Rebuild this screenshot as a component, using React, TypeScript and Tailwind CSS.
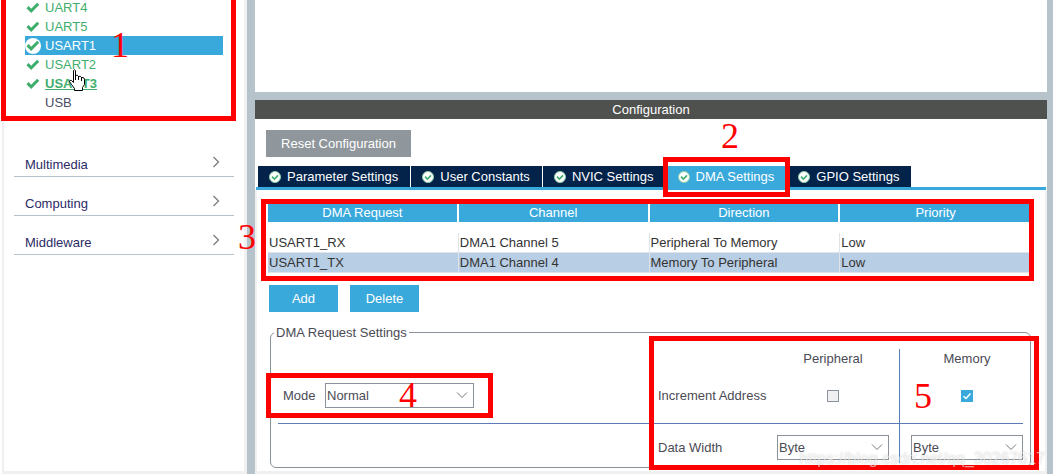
import { useState } from 'react';
import type { ReactNode } from 'react';

type PeripheralState = 'ok' | 'none';

interface Peripheral {
  name: string;
  state: PeripheralState;
}

interface DmaRequest {
  request: string;
  channel: string;
  direction: string;
  priority: string;
}

const PERIPHERALS: Peripheral[] = [
  { name: 'UART4', state: 'ok' },
  { name: 'UART5', state: 'ok' },
  { name: 'USART1', state: 'ok' },
  { name: 'USART2', state: 'ok' },
  { name: 'USART3', state: 'ok' },
  { name: 'USB', state: 'none' },
];

const CATEGORIES = ['Multimedia', 'Computing', 'Middleware'];

const TABS = [
  'Parameter Settings',
  'User Constants',
  'NVIC Settings',
  'DMA Settings',
  'GPIO Settings',
];

const REQUESTS: DmaRequest[] = [
  {
    request: 'USART1_RX',
    channel: 'DMA1 Channel 5',
    direction: 'Peripheral To Memory',
    priority: 'Low',
  },
  {
    request: 'USART1_TX',
    channel: 'DMA1 Channel 4',
    direction: 'Memory To Peripheral',
    priority: 'Low',
  },
];

function CheckMark() {
  return (
    <svg viewBox="0 0 16 16" className="w-4 h-4" fill="none">
      <path d="M2.5 7.2 L6.2 10.8 L13.2 3.8" stroke="#3fae6d" strokeWidth="3" />
    </svg>
  );
}

function TabIcon() {
  return (
    <svg viewBox="0 0 12 12" className="w-3 h-3 shrink-0" fill="none">
      <circle cx="6" cy="6" r="5.5" fill="#fff" stroke="#8fd0a8" />
      <path d="M3 5.6 L5.4 8 L9 4.4" stroke="#3fae6d" strokeWidth="1.6" />
    </svg>
  );
}

function HandCursor() {
  return (
    <svg viewBox="0 0 18 23" className="w-[18px] h-[23px]">
      <path
        d="M5.5 13.5 V1.5 Q6.500 0 7.500 1.5 V6.500 Q9.500 5.500 10.500 7.500 Q12.500 6.500 13.500 8.500 Q16.500 8 16.500 10.500 V15.500 L14.500 18.500 V21.500 H6.500 V19.500 L3.500 15.500 L1.500 12.500 Q1.500 10.500 3.500 11.500 Z"
        fill="#fff"
        stroke="#000"
      />
      <path d="M7.500 6 v5 M10.500 7 v4 M13.500 8 v4" stroke="#000" />
    </svg>
  );
}

// Red frame drawn over a region of the window
function Frame({ className }: { className: string }) {
  return <div className={`absolute z-10 border-5 border-[#ff0000] pointer-events-none ${className}`} />;
}

function Step({ className, children }: { className: string; children: ReactNode }) {
  return (
    <span
      className={`absolute z-20 font-['Liberation_Serif',serif] text-[36px] leading-9 text-[#ff0000] pointer-events-none ${className}`}
    >
      {children}
    </span>
  );
}

interface ComboProps {
  id: string;
  label?: string;
  options: string[];
  className: string;
}

function Combo({ id, label, options, className }: ComboProps) {
  return (
    <div className={`relative ${className}`}>
      <select
        id={id}
        aria-label={label}
        className="block w-full h-[25px] pl-px appearance-none bg-white border border-[#8b9299] text-[#4b4b55]"
      >
        {options.map((option) => (
          <option key={option}>{option}</option>
        ))}
      </select>
      <svg
        viewBox="0 0 12 8"
        className="absolute right-1.5 top-2 w-3 h-2 pointer-events-none"
        fill="none"
      >
        <path d="M1 1.500 L6 6.500 L11 1.500" stroke="#777" />
      </svg>
    </div>
  );
}

function CheckBox({ label, defaultChecked }: { label: string; defaultChecked?: boolean }) {
  return (
    <span className="relative w-3 h-3">
      <input
        type="checkbox"
        aria-label={label}
        defaultChecked={defaultChecked}
        className="peer block w-3 h-3 appearance-none bg-[#f0f0f2] border border-[#8b9299] checked:bg-[#39a9dc] checked:border-[#39a9dc]"
      />
      <svg
        viewBox="0 0 12 12"
        className="absolute inset-0 w-3 h-3 hidden peer-checked:block pointer-events-none"
        fill="none"
      >
        <path d="M2.500 6.200 L5 8.500 L9.500 3.500" stroke="#fff" strokeWidth="1.500" />
      </svg>
    </span>
  );
}

function Sidebar() {
  const [selected, setSelected] = useState('USART1');

  return (
    <aside className="relative flex w-[247px] shrink-0 pl-0.5 bg-white">
      <div className="flex-1 border-l-2 border-r-3 border-b-3 border-[#f0f0f2]">
        <ul className="-mt-0.5 pl-[21px] pr-[21px]">
          {PERIPHERALS.map(({ name, state }) => {
            const active = name === selected;
            return (
              <li key={name}>
                <button
                  onClick={() => setSelected(name)}
                  className={`flex items-center w-full h-[19px] text-left ${
                    active ? 'bg-[#39a9dc] text-white' : state === 'ok' ? 'text-[#3fae6d]' : 'text-[#4b4b63]'
                  }`}
                >
                  <span
                    className={`flex items-center justify-center w-4 h-4 mr-1 rounded-full ${
                      active ? 'bg-white' : ''
                    }`}
                  >
                    {state === 'ok' && <CheckMark />}
                  </span>
                  <span className={name === 'USART3' ? 'font-bold underline' : ''}>{name}</span>
                </button>
              </li>
            );
          })}
        </ul>

        <nav className="mt-[26px] px-2.5">
          {CATEGORIES.map((category) => (
            <button
              key={category}
              className="flex items-end justify-between w-full h-[39px] pl-[11px] pr-3.5 pb-0.5 border-b border-[#b7c3ca] text-left text-[#2b2b66]"
            >
              {category}
              <svg viewBox="0 0 8 14" className="w-2 h-3.5 mb-[5px]" fill="none">
                <path d="M1.500 2 L6.500 7 L1.500 12" stroke="#777" strokeWidth="1.200" />
              </svg>
            </button>
          ))}
        </nav>
      </div>

      <Frame className="-top-2 left-px w-[235px] h-[129px]" />
      <Step className="left-[111px] top-[27px]">1</Step>
      <Step className="left-[238px] top-[219px]">3</Step>
      <div className="absolute left-[68px] top-[69px] z-20">
        <HandCursor />
      </div>
    </aside>
  );
}

function RequestTable() {
  const [selected, setSelected] = useState(1);

  return (
    <div className="relative mt-[14px] ml-[11px] mr-3.5">
      <table className="w-full table-fixed border-separate border-spacing-0 text-[#333]">
        <thead>
          <tr className="bg-[#39a9dc] text-white">
            {['DMA Request', 'Channel', 'Direction', 'Priority'].map((title) => (
              <th
                key={title}
                className="p-0 font-normal leading-[18px] border-r-2 border-white last:border-r-0"
              >
                {title}
              </th>
            ))}
          </tr>
        </thead>
        <tbody>
          <tr className="h-[11px]" aria-hidden="true">
            <td colSpan={4} className="p-0" />
          </tr>
          {REQUESTS.map((row, index) => (
            <tr
              key={row.request}
              onClick={() => setSelected(index)}
              className={index === selected ? 'bg-[#b8cee4]' : ''}
            >
              {[row.request, row.channel, row.direction, row.priority].map((cell) => (
                <td
                  key={cell}
                  className="p-0 pl-px leading-[19px] border-r border-b border-[#dfe3e8] last:border-r-0"
                >
                  {cell}
                </td>
              ))}
            </tr>
          ))}
        </tbody>
      </table>
      <Frame className="-top-[5px] -left-[7px] -right-[3px] h-[82px]" />
    </div>
  );
}

function RequestSettings() {
  return (
    <div className="relative mt-[11px] ml-[13px] mr-3.5">
      <fieldset className="px-[7px] pb-1 border border-[#8b9299] rounded-md">
        <legend className="-ml-1 px-0.5 leading-[19px]">DMA Request Settings</legend>
        <div className="mt-[7px] grid grid-cols-[1fr_119px_122px_124px] grid-rows-[19px_56px_39px]">
          <div className="col-span-2" />
          <div className="flex items-center justify-center w-28">Peripheral</div>
          <div className="flex items-center justify-center pl-[11px] border-l border-[#5b7cb4]">
            Memory
          </div>

          <div className="flex items-center pl-[5px] border-b border-[#5b7cb4]">
            <div className="relative flex items-center">
              <label htmlFor="mode" className="w-[42px]">
                Mode
              </label>
              <Combo id="mode" options={['Normal', 'Circular']} className="w-[149px]" />
              <Frame className="-inset-y-2.5 -left-[17px] -right-[19px]" />
              <Step className="left-[116px] -top-1.5">4</Step>
            </div>
          </div>
          <div className="flex items-center border-b border-[#5b7cb4]">Increment Address</div>
          <div className="border-b border-[#5b7cb4]">
            <div className="flex items-center justify-center w-28 h-full">
              <CheckBox label="Peripheral increment address" />
            </div>
          </div>
          <div className="relative flex items-center justify-center pl-[11px] border-l border-b border-[#5b7cb4]">
            <CheckBox label="Memory increment address" defaultChecked />
            <Step className="left-3.5 top-2.5">5</Step>
          </div>

          <div />
          <div className="flex items-center pt-2">Data Width</div>
          <div className="pt-[11px]">
            <Combo
              id="peripheral-width"
              label="Peripheral data width"
              options={['Byte', 'Half Word', 'Word']}
              className="w-28"
            />
          </div>
          <div className="pt-[11px] pl-[11px] border-l border-[#5b7cb4]">
            <Combo
              id="memory-width"
              label="Memory data width"
              options={['Byte', 'Half Word', 'Word']}
              className="w-28"
            />
          </div>
        </div>
      </fieldset>
      <Frame className="top-[13px] -right-2 -bottom-0.5 w-[390px]" />
    </div>
  );
}

export default function App() {
  const [tab, setTab] = useState('DMA Settings');

  return (
    <div className="relative flex min-h-screen pb-px overflow-hidden bg-[#b7c3ca] font-['Liberation_Sans',Arial,sans-serif] text-[13px] leading-[19px] text-[#4b4b55]">
      <Sidebar />

      <main className="flex flex-col flex-1 min-w-0 ml-2 mr-1.5">
        <div className="h-[92px] bg-white" />

        <section className="relative flex flex-col flex-1 mt-2 bg-white">
          <h1 className="h-[19px] text-center text-white bg-[#4f514f]">Configuration</h1>

          <button className="block mt-[11px] ml-[11px] w-[145px] h-[27px] bg-[#8f969c] text-white">
            Reset Configuration
          </button>

          <div role="tablist" className="flex mt-[9px] mx-px pl-0.5 gap-px border-b-3 border-[#39a9dc]">
            {TABS.map((name) => (
              <button
                key={name}
                role="tab"
                aria-selected={name === tab}
                onClick={() => setTab(name)}
                className={`relative flex items-center gap-1.5 h-[21px] pl-[11px] pr-3 whitespace-nowrap text-white ${
                  name === tab ? 'bg-[#39a9dc]' : 'bg-[#03234b]'
                }`}
              >
                <TabIcon />
                {name}
                {name === 'DMA Settings' && <Frame className="-top-[9px] -bottom-2.5 -inset-x-1" />}
              </button>
            ))}
          </div>
          <Step className="left-[466px] top-[18px]">2</Step>

          <div className="flex-1 border-x-2 border-b-3 border-[#f0f0f2] pb-[3px]">
            <RequestTable />
            <div className="flex gap-3 mt-3 ml-3">
              <button className="w-[69px] h-[27px] bg-[#39a9dc] text-white">Add</button>
              <button className="w-[69px] h-[27px] bg-[#39a9dc] text-white">Delete</button>
            </div>
            <RequestSettings />
          </div>
        </section>
      </main>

      <div className="absolute right-2 bottom-1.5 z-30 text-base leading-5 text-white/60 [text-shadow:0_0_2px_#0003]">
        https://blog.csdn.net/qq_30267617
      </div>
    </div>
  );
}
